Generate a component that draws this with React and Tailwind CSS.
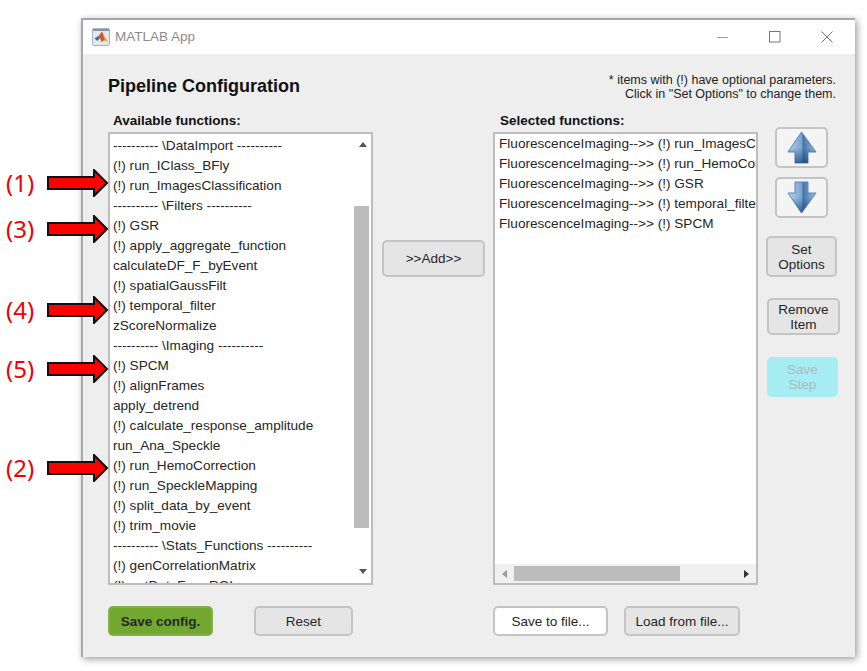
const FONT = "font-['Liberation_Sans',Arial,sans-serif]";

const available = [
  "---------- \\DataImport ----------",
  "(!) run_IClass_BFly",
  "(!) run_ImagesClassification",
  "---------- \\Filters ----------",
  "(!) GSR",
  "(!) apply_aggregate_function",
  "calculateDF_F_byEvent",
  "(!) spatialGaussFilt",
  "(!) temporal_filter",
  "zScoreNormalize",
  "---------- \\Imaging ----------",
  "(!) SPCM",
  "(!) alignFrames",
  "apply_detrend",
  "(!) calculate_response_amplitude",
  "run_Ana_Speckle",
  "(!) run_HemoCorrection",
  "(!) run_SpeckleMapping",
  "(!) split_data_by_event",
  "(!) trim_movie",
  "---------- \\Stats_Functions ----------",
  "(!) genCorrelationMatrix",
  "(!) getDataFromROI",
];

const selected = [
  "FluorescenceImaging-->> (!) run_ImagesClassification",
  "FluorescenceImaging-->> (!) run_HemoCorrection",
  "FluorescenceImaging-->> (!) GSR",
  "FluorescenceImaging-->> (!) temporal_filter",
  "FluorescenceImaging-->> (!) SPCM",
];

function RedArrow() {
  return (
    <svg width="62" height="28" viewBox="0 0 62 28">
      <polygon
        points="1,8 47,8 47,1 60,14 47,27 47,20 1,20"
        fill="#ff0000"
        stroke="#111"
        strokeWidth="2"
      />
    </svg>
  );
}

function Callout({ label, className }) {
  return (
    <div className={`absolute left-[6px] flex items-center ${className}`}>
      <span className="w-[41px] font-['Noto_Sans',sans-serif] text-[24px] leading-[28px] text-[#f00000]">{label}</span>
      <RedArrow />
    </div>
  );
}

function MatlabIcon() {
  return (
    <svg width="18" height="18" viewBox="0 0 18 18">
      <rect x="0.5" y="0.5" width="17" height="17" rx="1.5" fill="#e4e8ec" stroke="#a9b4bf" />
      <rect x="1" y="1" width="16" height="2" fill="#7f98ae" />
      <path d="M2.5 10.5 L6.5 8 L8 10 L5.5 13 Z" fill="#2f6fa8" />
      <path d="M6.5 8 L10 3.5 L12 8 L15.5 13.5 L12.5 12 L9.5 14 L8 10 Z" fill="#d9541e" />
      <path d="M10 3.5 L12 8 L15.5 13.5 L12.5 12 Z" fill="#f09a2c" />
    </svg>
  );
}

function ArrowIcon({ down }) {
  const id = down ? "arrowDown" : "arrowUp";
  const points = down
    ? "8,1 21,1 21,12 29,12 14.5,32 1,12 8,12"
    : "14.5,1 29,21 21,21 21,32 8,32 8,21 1,21";
  return (
    <svg width="30" height="33" viewBox="0 0 30 33">
      <defs>
        <linearGradient id={id} x1="0" x2="1" y1="0" y2="0">
          <stop offset="0" stopColor="#b4d2ec" />
          <stop offset="0.48" stopColor="#78a6d2" />
          <stop offset="0.54" stopColor="#4474a8" />
          <stop offset="1" stopColor="#9cc0e0" />
        </linearGradient>
        <linearGradient id={`${id}Shade`} x1="0" x2="0" y1="0" y2="1">
          <stop offset="0.5" stopColor="#1a3f78" stopOpacity="0" />
          <stop offset="1" stopColor="#1a3f78" stopOpacity="0.7" />
        </linearGradient>
      </defs>
      <polygon points={points} fill={`url(#${id})`} stroke="#5d86b1" strokeWidth="1" strokeLinejoin="round" />
      <polygon points={points} fill={`url(#${id}Shade)`} />
    </svg>
  );
}

function Tri({ dir, className }) {
  const pts = {
    up: "0,6 4,1 8,6",
    down: "0,1 8,1 4,6",
    left: "6,0 6,8 1,4",
    right: "1,0 1,8 6,4",
  };
  return (
    <svg width="8" height="8" viewBox="0 0 8 8" className={className}>
      <polygon points={pts[dir]} />
    </svg>
  );
}

function Btn({ border = "border-[#c4c4c4]", className, children }) {
  return (
    <button className={`flex items-center justify-center rounded-[5px] border-2 text-[13.5px] leading-[15px] text-[#262626] ${border} ${className}`}>
      {children}
    </button>
  );
}

export default function App() {
  return (
    <div className={`relative h-[671px] w-[867px] overflow-hidden bg-white pl-[81px] pt-[18px] ${FONT}`}>
      <div className="flex h-[639px] w-[774px] flex-col border-l-2 border-t-2 border-[#a8a8a8] bg-[#eeeeee] shadow-[2px_2px_7px_rgba(0,0,0,0.4)]">
        {/* title bar */}
        <div className="flex h-[34px] items-center bg-white pl-[9px] pr-[22px]">
          <MatlabIcon />
          <span className="ml-[5px] text-[13.5px] text-[#8c8c8c]">MATLAB App</span>
          <div className="ml-auto flex items-center gap-[40px]">
            <svg width="12" height="12" viewBox="0 0 12 12"><path d="M0 6.5 H11" stroke="#9a9a9a" strokeWidth="1" /></svg>
            <svg width="12" height="12" viewBox="0 0 12 12"><rect x="0.5" y="0.5" width="10.5" height="10.5" fill="none" stroke="#777" /></svg>
            <svg width="12" height="12" viewBox="0 0 12 12"><path d="M0.5 0.5 L11.5 11.5 M11.5 0.5 L0.5 11.5" stroke="#777" /></svg>
          </div>
        </div>

        <div className="flex-1 pl-[25px]">
          {/* heading */}
          <div className="flex h-[59px] items-start justify-between pr-[19px] pt-[20px]">
            <h1 className="text-[18px] font-bold leading-[24px] text-[#111]">Pipeline Configuration</h1>
            <p className="-mt-[1px] text-right text-[12.5px] leading-[14px] text-[#222]">
              * items with (!) have optional parameters.
              <br />
              Click in "Set Options" to change them.
            </p>
          </div>

          <div className="flex items-start">
            {/* available */}
            <div className="w-[265px] shrink-0">
              <div className="h-[19px] pl-[5px] text-[13.5px] font-bold leading-[16px] text-[#111]">Available functions:</div>
              <div className="flex h-[453px] border-2 border-[#bdbdbd] bg-white">
                <div className="flex-1 overflow-hidden pl-[3px] pt-[2px]">
                  {available.map((item, i) => (
                    <div key={i} className="h-[20px] whitespace-nowrap text-[13.6px] leading-[20px] text-[#262626]">{item}</div>
                  ))}
                </div>
                <div className="flex w-[17px] flex-col items-center">
                  <Tri dir="up" className="mt-[7px] fill-[#555]" />
                  <div className="mt-[57px] h-[322px] w-[15px] self-start bg-[#bcbcbc]" />
                  <Tri dir="down" className="mt-[40px] fill-[#555]" />
                </div>
              </div>
              <div className="mt-[21px] flex">
                <Btn border="border-[#84b04a]" className="h-[30px] w-[105px] bg-[#72a82f] font-bold text-[#111]">Save config.</Btn>
                <Btn className="ml-[41px] h-[30px] w-[99px] bg-[#e5e5e5]">Reset</Btn>
              </div>
            </div>

            {/* add */}
            <Btn className="ml-[9px] mt-[127px] h-[37px] w-[103px] shrink-0 bg-[#e5e5e5]">&gt;&gt;Add&gt;&gt;</Btn>

            {/* selected */}
            <div className="ml-[8px] w-[265px] shrink-0">
              <div className="h-[19px] pl-[7px] text-[13.5px] font-bold leading-[16px] text-[#111]">Selected functions:</div>
              <div className="flex h-[453px] flex-col border-2 border-[#bdbdbd] bg-white">
                <div className="flex-1 overflow-hidden pl-[4px]">
                  {selected.map((item, i) => (
                    <div key={i} className="h-[20px] whitespace-nowrap text-[13.6px] leading-[20px] text-[#262626]">{item}</div>
                  ))}
                </div>
                <div className="flex h-[19px] items-center bg-[#f0f0f0]">
                  <Tri dir="left" className="ml-[6px] fill-[#999]" />
                  <div className="ml-[5px] h-[15px] w-[166px] bg-[#bcbcbc]" />
                  <Tri dir="right" className="ml-[63px] fill-[#333]" />
                </div>
              </div>
              <div className="mt-[21px] flex">
                <Btn className="h-[30px] w-[115px] bg-white">Save to file...</Btn>
                <Btn className="ml-[16px] h-[30px] w-[116px] bg-[#e5e5e5]">Load from file...</Btn>
              </div>
            </div>

            {/* side buttons */}
            <div className="ml-[8px] mt-[14px] flex shrink-0 flex-col items-start">
              <Btn className="ml-[9px] h-[41px] w-[53px] bg-[#f4f4f4]"><ArrowIcon /></Btn>
              <Btn className="ml-[9px] mt-[9px] h-[41px] w-[53px] bg-[#f4f4f4]"><ArrowIcon down /></Btn>
              <Btn className="mt-[18px] h-[41px] w-[71px] bg-[#e5e5e5]">Set<br />Options</Btn>
              <Btn className="ml-[1px] mt-[21px] h-[37px] w-[73px] bg-[#e5e5e5]">Remove<br />Item</Btn>
              <Btn border="border-[#a6edf3]" className="ml-[1px] mt-[22px] h-[40px] w-[71px] bg-[#a6edf3] text-[#a9bcc0]">Save<br />Step</Btn>
            </div>
          </div>
        </div>
      </div>

      <Callout label="(1)" className="top-[169px]" />
      <Callout label="(3)" className="top-[215px]" />
      <Callout label="(4)" className="top-[296px]" />
      <Callout label="(5)" className="top-[355px]" />
      <Callout label="(2)" className="top-[454px]" />
    </div>
  );
}
